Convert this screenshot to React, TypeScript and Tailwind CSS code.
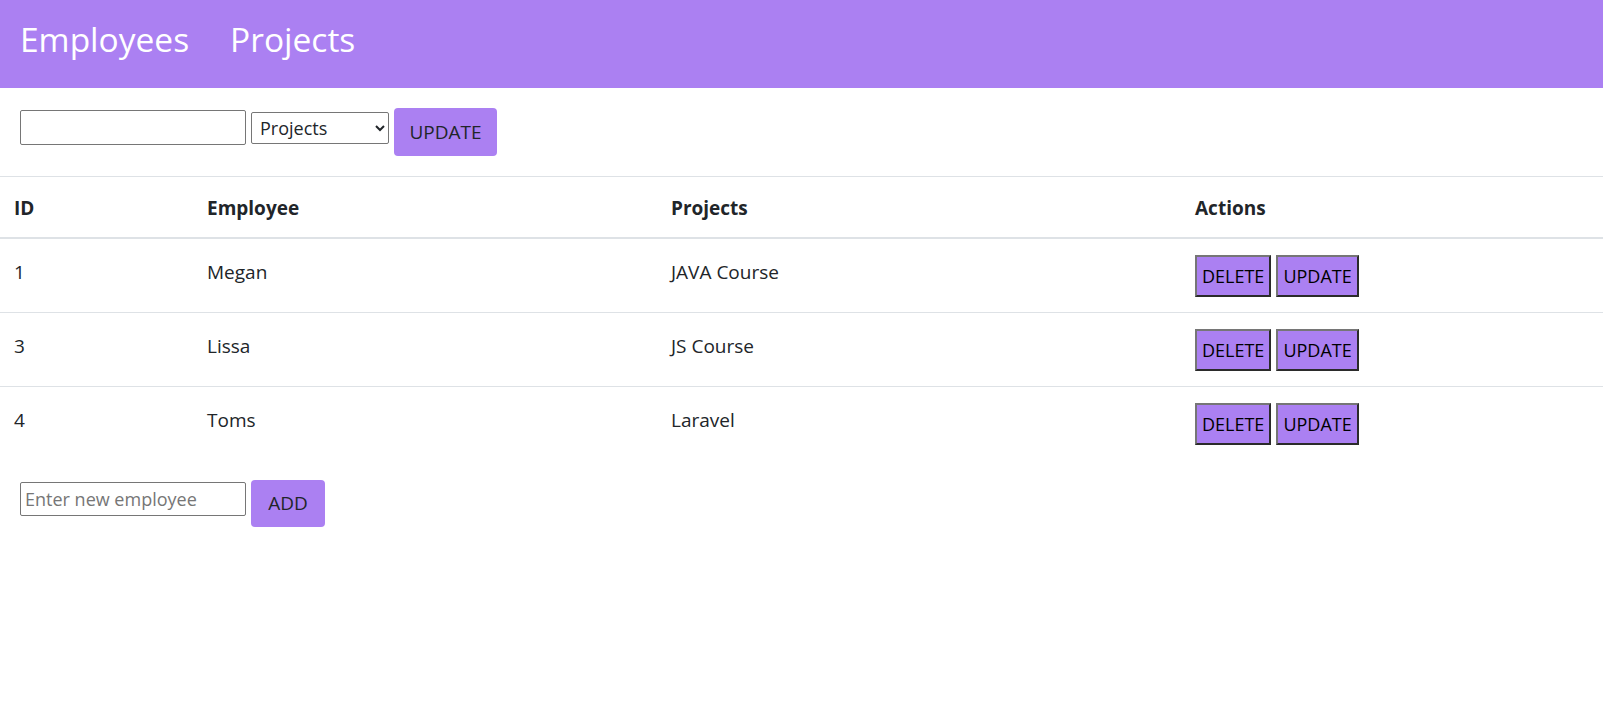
import React from 'react';

const rows = [
  { id: 1, name: 'Megan', project: 'JAVA Course' },
  { id: 3, name: 'Lissa', project: 'JS Course' },
  { id: 4, name: 'Toms', project: 'Laravel' },
];

function ActionButton({ label }: { label: string }) {
  return (
    <button
      type="button"
      className="h-[42px] px-[5px] bg-[#ab80f2] text-black text-[18px] leading-none border-2 border-t-[#767676] border-l-[#767676] border-b-[#2b2b2b] border-r-[#2b2b2b]"
    >
      {label}
    </button>
  );
}

export default function App() {
  return (
    <div className="min-h-[701px] bg-white text-[#212529] font-['Open_Sans',sans-serif]">
      <nav className="h-[88px] bg-[#ab80f2] flex items-start pt-[22px] px-5 gap-[41px]">
        <a href="#" className="text-white text-[33.5px] leading-[34px]">Employees</a>
        <a href="#" className="text-white text-[33.5px] leading-[34px]">Projects</a>
      </nav>

      <div className="flex items-start gap-[5px] px-5 pt-5 pb-5">
        <input
          type="text"
          className="mt-[2px] w-[226px] h-[35px] border border-[#767676] rounded-[2px] px-1 text-[18px]"
        />
        <select className="mt-[4px] w-[138px] h-[32px] border border-[#767676] rounded-[2px] text-[18px] px-1 bg-white">
          <option>Projects</option>
        </select>
        <button type="button" className="w-[103px] h-[48px] bg-[#ab80f2] rounded-[4px] text-[19px] text-[#212529]">
          UPDATE
        </button>
      </div>

      <table className="w-full table-fixed border-collapse text-[19px] leading-[28px]">
        <colgroup>
          <col className="w-[207px]" />
          <col className="w-[464px]" />
          <col className="w-[524px]" />
          <col />
        </colgroup>
        <thead>
          <tr className="border-t border-[#dee2e6] border-b-2 border-b-[#dee2e6]">
            <th className="text-left font-bold pl-[14px] pt-[17px] pb-[15px]">ID</th>
            <th className="text-left font-bold pt-[17px] pb-[15px]">Employee</th>
            <th className="text-left font-bold pt-[17px] pb-[15px]">Projects</th>
            <th className="text-left font-bold pt-[17px] pb-[15px]">Actions</th>
          </tr>
        </thead>
        <tbody>
          {rows.map((r, i) => (
            <tr key={r.id} className={i < rows.length - 1 ? 'border-b border-[#dee2e6]' : ''}>
              <td className="pl-[14px] pt-[19px] align-top">{r.id}</td>
              <td className="pt-[19px] align-top">{r.name}</td>
              <td className="pt-[19px] align-top">{r.project}</td>
              <td className="pt-4 pb-[15px] align-top">
                <div className="flex gap-[5px]">
                  <ActionButton label="DELETE" />
                  <ActionButton label="UPDATE" />
                </div>
              </td>
            </tr>
          ))}
        </tbody>
      </table>

      <div className="flex items-start gap-[5px] px-5 pt-5">
        <input
          type="text"
          placeholder="Enter new employee"
          className="mt-[2px] w-[226px] h-[34px] border border-[#767676] rounded-[2px] px-1 text-[18px] placeholder:text-[#767676]"
        />
        <button type="button" className="w-[74px] h-[47px] bg-[#ab80f2] rounded-[4px] text-[19px] text-[#212529]">
          ADD
        </button>
      </div>
    </div>
  );
}
